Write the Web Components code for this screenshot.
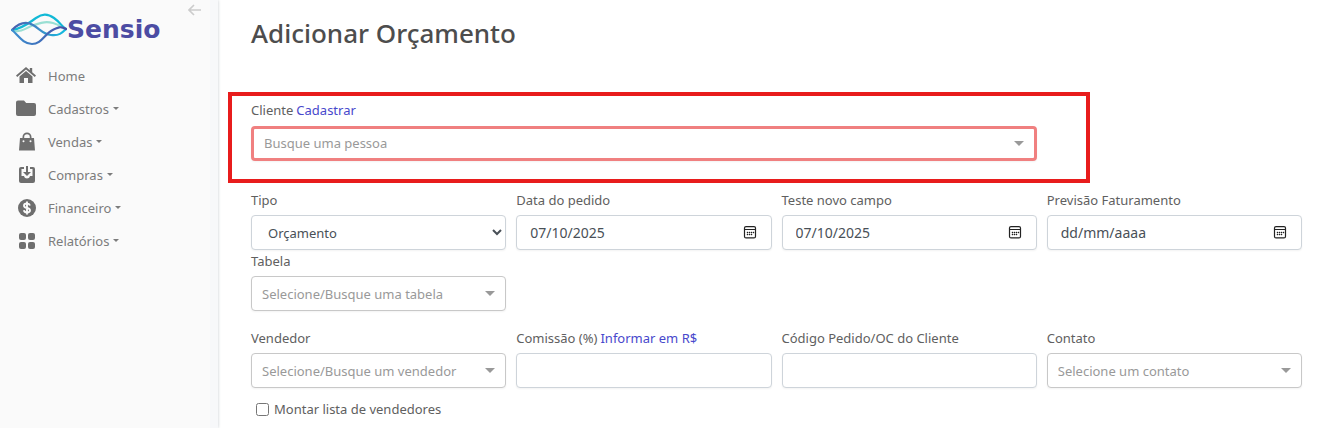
<!DOCTYPE html>
<html lang="pt-BR">
<head>
<meta charset="utf-8">
<title>Adicionar Orçamento</title>
<style>
  body { margin: 0; background: #fff; color: #606060; font: 13px/20px "Noto Sans", "Open Sans", sans-serif; }
</style>
</head>
<body>
<app-shell>
  <side-bar slot="side">
    <nav-item icon="home" label="Home"></nav-item>
    <nav-item icon="folder" label="Cadastros" menu></nav-item>
    <nav-item icon="bag" label="Vendas" menu></nav-item>
    <nav-item icon="inbox" label="Compras" menu></nav-item>
    <nav-item icon="dollar" label="Financeiro" menu></nav-item>
    <nav-item icon="grid" label="Relatórios" menu></nav-item>
  </side-bar>
  <budget-form></budget-form>
</app-shell>

<script>
const define = (name, html, setup) => {
  const template = document.createElement('template');
  template.innerHTML = html;
  customElements.define(name, class extends HTMLElement {
    constructor() {
      super();
      this.attachShadow({ mode: 'open' }).append(template.content.cloneNode(true));
    }
    connectedCallback() {
      if (setup && !this.ready) { this.ready = true; setup(this, this.shadowRoot); }
    }
  });
};

define('app-shell', `
  <style>
    :host { display: flex; min-height: 100vh; }
    main { flex: 1; min-width: 0; padding: 15px 22px 8px 33px; }
  </style>
  <slot name="side"></slot>
  <main><slot></slot></main>`);

define('brand-logo', `
  <style>
    :host { display: block; }
    a { display: flex; align-items: center; color: #4c4ca3; text-decoration: none; }
    svg { flex: none; }
    span { font: bold 25px/32px "DejaVu Sans", sans-serif; }
  </style>
  <a href="#">
    <svg width="56" height="34" viewBox="0 0 56 34" fill="none" stroke-width="2.200" stroke-linecap="round">
      <defs>
        <linearGradient id="deep"><stop offset="0" stop-color="#3c8fd0"/><stop offset=".5" stop-color="#3f72bd"/><stop offset="1" stop-color="#4c4ca3"/></linearGradient>
        <linearGradient id="sea"><stop offset="0" stop-color="#4a5cae"/><stop offset=".5" stop-color="#3c8cc8"/><stop offset="1" stop-color="#12bde0"/></linearGradient>
      </defs>
      <path d="M2 18C11 20 16 14 23 12S34 8 42 10S50 15 54 16" stroke="#9adfd3"/>
      <path d="M1 17C13 15 19 9 25 5S36 0 43 5S50 13 55 16" stroke="#12b9d6"/>
      <path d="M1 17C8 10 15 8 22 12S32 21 40 22S51 20 55 16" stroke="url(#sea)"/>
      <path d="M1 17C7 22 12 31 21 31S33 22 40 18S50 13 55 16" stroke="url(#deep)"/>
    </svg>
    <span>Sensio</span>
  </a>`);

define('side-bar', `
  <style>
    :host { display: block; box-sizing: border-box; flex: 0 0 218px; background: #fafafa; border-right: 8px solid #f7f8fa; box-shadow: 0 0 3px #c5cad0; }
    header { display: flex; justify-content: space-between; align-items: flex-start; padding: 0 9px 0 11px; height: 59px; }
    brand-logo { padding-top: 13px; }
    button { border: 0; background: none; padding: 4px 0; line-height: 0; }
    nav { display: flex; flex-direction: column; }
  </style>
  <header>
    <brand-logo></brand-logo>
    <button type="button" aria-label="Recolher menu">
      <svg width="13" height="12" viewBox="0 0 13 12" fill="none" stroke="#ccc" stroke-width="1.6"><path d="M13 6H1M6 1L1 6l5 5"/></svg>
    </button>
  </header>
  <nav><slot></slot></nav>`);

const icons = {
  home: '<path d="M0 9.6 10 1l3.8 3.2V2h2.4v4.2L20 9.6l-1.200 1.300L10 3.400 1.200 10.900z"/><path d="M10 5l6.500 5.500V17h-4.500v-5h-4v5H3.500v-6.500z"/>',
  folder: '<path d="M2 1.500h6l2.200 2.500H18a2 2 0 0 1 2 2v9a2 2 0 0 1-2 2H2a2 2 0 0 1-2-2v-11.500a2 2 0 0 1 2-2z"/>',
  bag: '<path fill-rule="evenodd" d="M4 6h2.500V5a4.500 4.500 0 0 1 9 0V6H18l1 12.500H3zM8.200 6h5.600V5a2.800 2.800 0 0 0-5.600 0zM7.500 8.200a1 1 0 1 0 0 2 1 1 0 0 0 0-2zm7 0a1 1 0 1 0 0 2 1 1 0 0 0 0-2z"/>',
  inbox: '<path fill-rule="evenodd" d="M5 2h3v2H5.500v7H8c.6 1.800 1.600 2.500 3 2.500s2.400-.7 3-2.500h2.500V4H14V2h3a2 2 0 0 1 2 2v12a2 2 0 0 1-2 2H5a2 2 0 0 1-2-2V4a2 2 0 0 1 2-2z"/><path d="M10 1h2v6h3l-4 4-4-4h3z"/>',
  dollar: '<circle cx="11" cy="10" r="9"/><path d="M14 7.500C13.500 6 12.500 5.500 11 5.500c-1.800 0-3 .8-3 2.200 0 3.200 6 1.400 6 4.600 0 1.400-1.200 2.200-3 2.200-1.700 0-2.800-.7-3.200-2.200M11 3.500v13" fill="none" stroke="#fafafa" stroke-width="1.900"/>',
  grid: '<rect x="3" y="2" width="7" height="7" rx="2"/><rect x="12" y="2" width="7" height="7" rx="2"/><rect x="3" y="11" width="7" height="7" rx="2"/><rect x="12" y="11" width="7" height="7" rx="2"/>'
};

define('nav-item', `
  <style>
    :host { display: block; }
    a { display: flex; align-items: center; height: 33px; padding-left: 16px; color: #7c7c7c; text-decoration: none; }
    svg { width: 20px; height: 20px; margin-right: 12px; fill: #6e6e6e; overflow: visible; }
    i { display: none; margin-left: 4px; border: 3px solid transparent; border-top-color: currentColor; border-bottom: 0; }
    :host([menu]) i { display: block; }
  </style>
  <a href="#"><svg viewBox="0 0 20 20"></svg><span></span><i></i></a>`,
  (el, root) => {
    root.querySelector('svg').innerHTML = icons[el.getAttribute('icon')];
    root.querySelector('span').textContent = el.getAttribute('label');
  });

const fieldStyle = `
    :host { display: block; min-width: 0; }
    .caption { display: flex; gap: 3px; margin-bottom: 5px; }
    ::slotted(a) { color: #4848cc; text-decoration: none; }
    .box { box-sizing: border-box; display: block; width: 100%; height: 35px; margin: 0; border: 1px solid #ced4da; border-radius: 4px; background-color: #fff; color: #495057; font: inherit; box-shadow: 0 1px 2px #0000000d; outline: 0; }`;

define('select-field', `
  <style>${fieldStyle}
    select { padding: 0 12px; }
    :host([search]) select { appearance: none; padding: 0 10px; border-color: #c8c8c8; color: #999;
      background-image: url("data:image/svg+xml,%3Csvg xmlns='http://www.w3.org/2000/svg' width='10' height='5'%3E%3Cpath d='M0 0h10L5 5z' fill='%23999'/%3E%3C/svg%3E");
      background-repeat: no-repeat; background-position: right 10px center; }
    :host([invalid]) select { border: 3px solid #f08080; padding-bottom: 2px; }
    :host([invalid]) .caption { margin-bottom: 6px; }
  </style>
  <div class="caption"><label for="control"></label><slot></slot></div>
  <select id="control" class="box"><option></option></select>`,
  (el, root) => {
    root.querySelector('label').textContent = el.getAttribute('label');
    root.querySelector('option').textContent = el.getAttribute('value');
  });

define('text-field', `
  <style>${fieldStyle}
    input { padding: 0 12px; }
  </style>
  <div class="caption"><label for="control"></label><slot></slot></div>
  <input id="control" class="box" type="text">`,
  (el, root) => { root.querySelector('label').textContent = el.getAttribute('label'); });

define('date-field', `
  <style>${fieldStyle}
    div.box { display: flex; align-items: center; padding: 0 14px 0 13px; font-size: 14px; }
    input { flex: 1; min-width: 0; border: 0; padding: 0; background: none; color: inherit; font: inherit; outline: 0; }
    input::placeholder { color: inherit; opacity: 1; }
    button { border: 0; padding: 0; background: none; line-height: 0; }
  </style>
  <div class="caption"><label for="control"></label></div>
  <div class="box">
    <input id="control" type="text" placeholder="dd/mm/aaaa">
    <button type="button" aria-label="Abrir calendário">
      <svg width="14" height="13" viewBox="0 0 14 13" fill="#222">
        <rect x="1.500" y=".6" width="11" height="11.300" rx="1.500" fill="none" stroke="#222" stroke-width="1.200"/>
        <path d="M1.500 3h11v1h-11z"/>
        <path d="M6 6h1v1H6zM8 6h1v1H8zM10 6h1v1h-1zM4 8h1v1H4zM6 8h1v1H6zM8 8h1v1H8zM4 6h1v1H4z" stroke="#222" stroke-width=".4"/>
      </svg>
    </button>
  </div>`,
  (el, root) => {
    root.querySelector('label').textContent = el.getAttribute('label');
    root.querySelector('input').value = el.getAttribute('value') || '';
  });

define('check-field', `
  <style>
    :host { display: block; }
    label { display: flex; align-items: center; gap: 5px; padding-left: 5px; }
    input { width: 13px; height: 13px; margin: 0; }
  </style>
  <label><input type="checkbox"><slot></slot></label>`);

define('highlight-frame', `
  <style>
    :host { display: block; position: relative; }
    :host::after { content: ""; position: absolute; inset: -8px -53px -22px -23px; border: 4px solid #e81c1c; pointer-events: none; }
  </style>
  <slot></slot>`);

define('budget-form', `
  <style>
    :host { display: block; }
    h1 { margin: 0 0 49px; font-size: 26px; line-height: 36px; font-weight: 500; color: #4d4d4d; }
    form { display: grid; grid-template-columns: repeat(4, minmax(0, 1fr)); column-gap: 10px; }
    .client { grid-column: span 3; margin-bottom: 29px; }
    .first { grid-column: 1; }
    .table { grid-column: 1; margin: 1px 0 17px; }
    .check { grid-column: 1 / -1; margin-top: 11px; }
  </style>
  <h1>Adicionar Orçamento</h1>
  <form>
    <highlight-frame class="client">
      <select-field search invalid label="Cliente" value="Busque uma pessoa"><a href="#">Cadastrar</a></select-field>
    </highlight-frame>
    <select-field class="first" label="Tipo" value="Orçamento"></select-field>
    <date-field label="Data do pedido" value="07/10/2025"></date-field>
    <date-field label="Teste novo campo" value="07/10/2025"></date-field>
    <date-field label="Previsão Faturamento"></date-field>
    <select-field class="table" search label="Tabela" value="Selecione/Busque uma tabela"></select-field>
    <select-field class="first" search label="Vendedor" value="Selecione/Busque um vendedor"></select-field>
    <text-field label="Comissão (%)"><a href="#">Informar em R$</a></text-field>
    <text-field label="Código Pedido/OC do Cliente"></text-field>
    <select-field search label="Contato" value="Selecione um contato"></select-field>
    <check-field class="check">Montar lista de vendedores</check-field>
  </form>`);
</script>
</body>
</html>
